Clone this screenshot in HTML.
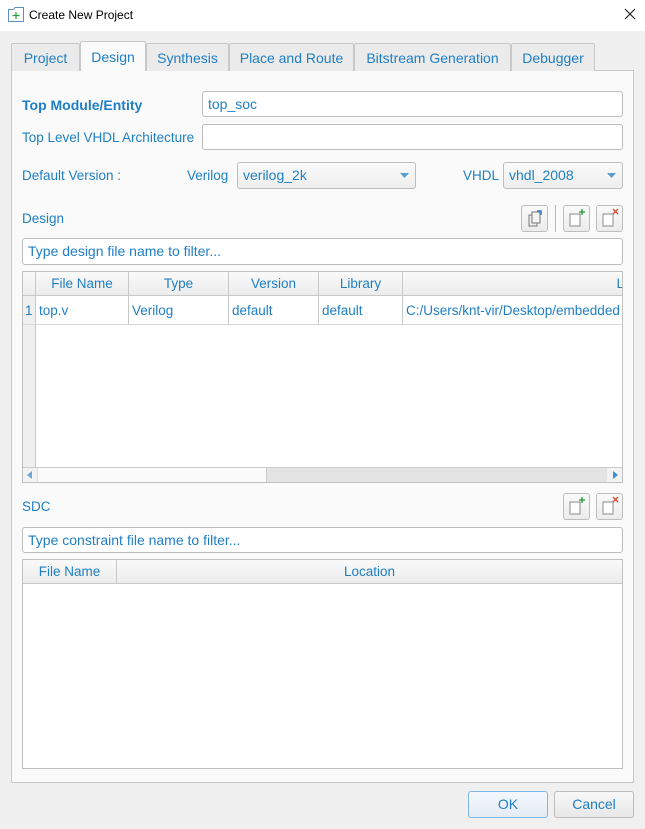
<!DOCTYPE html>
<html><head><style>
*{box-sizing:border-box}
body{margin:0;width:645px;height:829px;background:#f0f0f0;font-family:"Liberation Sans",sans-serif;font-size:13px;color:#1f7fc4;position:relative;overflow:hidden}
.a{position:absolute}
.title{left:0;top:0;width:645px;height:31px;background:#fff;color:#000;font-size:12px}
.panel{left:11px;top:70px;width:623px;height:713px;background:#fafafa;border:1px solid #c8c8c8}
.tab{top:43px;height:28px;background:#ebebeb;border:1px solid #c8c8c8;border-bottom:none;text-align:center;line-height:28px;font-size:14px;border-radius:2px 2px 0 0}
.tab.on{top:41px;height:30px;background:#fafafa;line-height:30px}
.inp{background:#fff;border:1px solid #bdbdbd;border-radius:3px;padding-left:5px;font-size:14px;line-height:24px}
.lbl{font-size:13.5px;line-height:20px}
.btn{width:27px;height:27px;border:1px solid #bdbdbd;border-radius:3px;background:linear-gradient(#fafafa,#ececec)}
.tbl{background:#fff;border:1px solid #c0c0c0}
.th{height:24px;background:linear-gradient(#fafafa,#ececec);border-right:1px solid #c8c8c8;border-bottom:1px solid #c8c8c8;text-align:center;line-height:23px;font-size:13.5px}
.td{height:29px;border-right:1px solid #c8c8c8;border-bottom:1px solid #d8d8d8;line-height:29px;padding-left:3px;font-size:13.5px;white-space:nowrap;overflow:hidden}
.pb{height:27px;border:1px solid #bdbdbd;border-radius:3px;background:linear-gradient(#f8f8f8,#e8e8e8);text-align:center;line-height:25px;font-size:14px}
</style></head><body>
<div class="a title">
<svg class="a" style="left:7px;top:6px" width="18" height="17"><path d="M1.5 3.5h5l1.5-2h8.5v14h-15z" fill="#fff" stroke="#5b8fc7"/><path d="M9 6v7M5.5 9.5h7" stroke="#21a33a" stroke-width="1.2"/></svg>
<span class="a" style="left:29px;top:8px">Create New Project</span>
<svg class="a" style="left:624px;top:8px" width="12" height="12"><path d="M1 1l10 10M11 1L1 11" stroke="#222" stroke-width="1.2"/></svg>
</div>
<div class="a panel"></div>
<div class="a tab" style="left:11px;width:69px">Project</div>
<div class="a tab on" style="left:80px;width:66px">Design</div>
<div class="a tab" style="left:146px;width:83px">Synthesis</div>
<div class="a tab" style="left:229px;width:125px">Place and Route</div>
<div class="a tab" style="left:354px;width:157px">Bitstream Generation</div>
<div class="a tab" style="left:511px;width:84px">Debugger</div>

<div class="a lbl" style="left:22px;top:95px;font-weight:bold;font-size:14px">Top Module/Entity</div>
<div class="a inp" style="left:202px;top:91px;width:421px;height:26px;color:#1f7fc4">top_soc</div>
<div class="a lbl" style="left:22px;top:128px">Top Level VHDL Architecture</div>
<div class="a inp" style="left:202px;top:124px;width:421px;height:26px"></div>
<div class="a lbl" style="left:22px;top:166px">Default Version :</div>
<div class="a lbl" style="left:187px;top:166px">Verilog</div>
<div class="a inp" style="left:237px;top:162px;width:179px;height:27px;background:linear-gradient(#fafafa,#eee)">verilog_2k</div>
<svg class="a" style="left:400px;top:173px" width="9" height="5"><path d="M0 0h9L4.5 5z" fill="#5a9fd4"/></svg>
<div class="a lbl" style="left:463px;top:166px">VHDL</div>
<div class="a inp" style="left:503px;top:162px;width:120px;height:27px;background:linear-gradient(#fafafa,#eee)">vhdl_2008</div>
<svg class="a" style="left:607px;top:173px" width="9" height="5"><path d="M0 0h9L4.5 5z" fill="#5a9fd4"/></svg>

<div class="a lbl" style="left:22px;top:209px">Design</div>
<div class="a btn" style="left:521px;top:205px"><svg width="25" height="25"><rect x="7" y="9" width="8" height="11" fill="#eee" stroke="#777"/><rect x="10" y="6" width="8" height="11" fill="#f4f4f4" stroke="#777"/><path d="M15 5l4 0 0 4" stroke="#2a7fd0" stroke-width="1.5" fill="none"/></svg></div>
<div class="a" style="left:555px;top:205px;width:1px;height:27px;background:#bbb"></div>
<div class="a btn" style="left:563px;top:205px"><svg width="25" height="25"><rect x="6" y="8" width="10" height="12" fill="#fff" stroke="#888"/><path d="M18 3v6M15 6h6" stroke="#1a9a2a" stroke-width="1.3"/></svg></div>
<div class="a btn" style="left:596px;top:205px"><svg width="25" height="25"><rect x="6" y="8" width="10" height="12" fill="#fff" stroke="#888"/><path d="M16 3l5 5M21 3l-5 5" stroke="#e0452a" stroke-width="1.3"/></svg></div>
<div class="a inp" style="left:22px;top:238px;width:601px;height:27px">Type design file name to filter...</div>

<div class="a tbl" style="left:22px;top:271px;width:601px;height:212px;overflow:hidden">
<div class="a" style="left:0;top:24px;width:13px;height:171px;background:#efefef;border-right:1px solid #c8c8c8"></div>
<div class="a th" style="left:0;top:0;width:13px"></div>
<div class="a th" style="left:13px;top:0;width:93px">File Name</div>
<div class="a th" style="left:106px;top:0;width:100px">Type</div>
<div class="a th" style="left:206px;top:0;width:90px">Version</div>
<div class="a th" style="left:296px;top:0;width:84px">Library</div>
<div class="a th" style="left:380px;top:0;width:221px;text-align:right;border-right:none">L</div>
<div class="a td" style="left:0;top:24px;width:13px;padding-left:2px">1</div>
<div class="a td" style="left:13px;top:24px;width:93px">top.v</div>
<div class="a td" style="left:106px;top:24px;width:100px">Verilog</div>
<div class="a td" style="left:206px;top:24px;width:90px">default</div>
<div class="a td" style="left:296px;top:24px;width:84px">default</div>
<div class="a td" style="left:380px;top:24px;width:221px;border-right:none">C:/Users/knt-vir/Desktop/embedded</div>
<div class="a" style="left:0;top:195px;width:599px;height:15px;background:#f2f2f2;border-top:1px solid #ccc"></div>
<div class="a" style="left:14px;top:196px;width:230px;height:14px;background:#fbfbfb;border-right:1px solid #ccc;border-left:1px solid #ddd"></div>
<div class="a" style="left:244px;top:196px;width:340px;height:14px;background:#e4e4e4"></div>
<svg class="a" style="left:4px;top:199px" width="5" height="8"><path d="M5 0v8L0 4z" fill="#6aa7d8"/></svg>
<svg class="a" style="left:590px;top:199px" width="5" height="8"><path d="M0 0v8l5-4z" fill="#3a8fd8"/></svg>
</div>

<div class="a lbl" style="left:22px;top:497px">SDC</div>
<div class="a btn" style="left:563px;top:493px"><svg width="25" height="25"><rect x="6" y="8" width="10" height="12" fill="#fff" stroke="#888"/><path d="M18 3v6M15 6h6" stroke="#1a9a2a" stroke-width="1.3"/></svg></div>
<div class="a btn" style="left:596px;top:493px"><svg width="25" height="25"><rect x="6" y="8" width="10" height="12" fill="#fff" stroke="#888"/><path d="M16 3l5 5M21 3l-5 5" stroke="#e0452a" stroke-width="1.3"/></svg></div>
<div class="a inp" style="left:22px;top:527px;width:601px;height:26px">Type constraint file name to filter...</div>
<div class="a tbl" style="left:22px;top:559px;width:601px;height:210px">
<div class="a th" style="left:0;top:0;width:94px">File Name</div>
<div class="a th" style="left:94px;top:0;width:505px;border-right:none">Location</div>
</div>

<div class="a pb" style="left:468px;top:791px;width:80px;border-color:#7fb8e8;background:linear-gradient(#f4f8fc,#e4ecf4)">OK</div>
<div class="a pb" style="left:554px;top:791px;width:80px">Cancel</div>
</body></html>
